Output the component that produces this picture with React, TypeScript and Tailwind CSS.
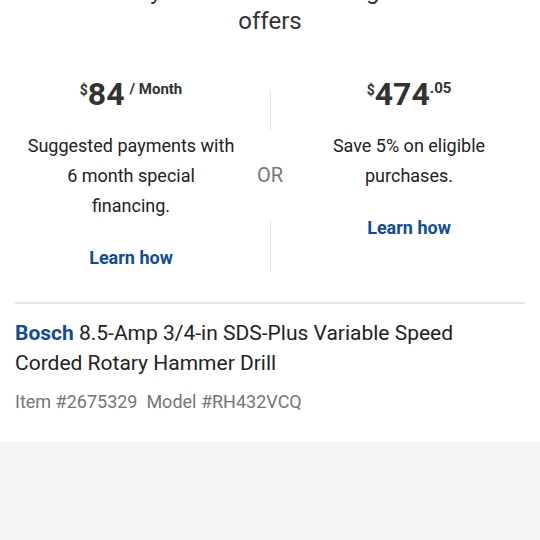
export default function App() {
  return (
    <div className="flex h-[540px] w-[540px] flex-col overflow-hidden bg-[#f5f5f5] font-['Roboto',sans-serif] text-[#333]">
      <section className="bg-white pb-[27px]">
        <div className="-mt-[24px] px-[15px] text-center text-[24px] leading-[30px] text-[#333]">
          <p>With MyLowe's Credit Card get these</p>
          <p>offers</p>
        </div>

        <div className="mt-[42px] grid grid-cols-[232px_1fr_232px] px-[15px]">
          <div className="flex flex-col items-center text-center">
            <div className="flex items-start font-bold text-[#333]">
              <span className="mt-[5px] text-[14px] leading-none">$</span>
              <span className="text-[32px] leading-[32px]">84</span>
              <span className="mt-[4px] ml-[5px] text-[15px] leading-none">/ Month</span>
            </div>
            <p className="mt-[21px] text-[18px] leading-[30px] text-[#222]">
              Suggested payments with
              <br />6 month special
              <br />financing.
            </p>
            <a className="mt-[22px] text-[18px] font-bold leading-[30px] text-[#0f4c9e]">Learn how</a>
          </div>

          <div className="flex flex-col items-center pt-[13px]">
            <div className="h-[39px] w-px bg-[#e3e3e3]" />
            <span className="mt-[33px] text-[20px] leading-[24px] text-[#777]">OR</span>
            <div className="mt-[33px] h-[52px] w-px bg-[#e3e3e3]" />
          </div>

          <div className="flex flex-col items-center text-center">
            <div className="flex items-start font-bold text-[#333]">
              <span className="mt-[5px] text-[14px] leading-none">$</span>
              <span className="text-[32px] leading-[32px]">474</span>
              <span className="mt-[3px] text-[15px] leading-none">.05</span>
            </div>
            <p className="mt-[21px] text-[18px] leading-[30px] text-[#222]">
              Save 5% on eligible
              <br />purchases.
            </p>
            <a className="mt-[22px] text-[18px] font-bold leading-[30px] text-[#0f4c9e]">Learn how</a>
          </div>
        </div>

        <div className="mx-[15px] mt-[29px] border-t-2 border-[#e6e6e6]" />

        <div className="px-[15px] pt-[14px]">
          <h1 className="text-[21px] leading-[30px] text-[#222]">
            <span className="font-bold text-[#0f4c9e]">Bosch</span> 8.5-Amp 3/4-in SDS-Plus Variable Speed
            Corded Rotary Hammer Drill
          </h1>
          <p className="mt-[11px] text-[18px] leading-[26px] text-[#767676]">
            Item #2675329&nbsp;&nbsp;Model #RH432VCQ
          </p>
        </div>
      </section>
    </div>
  );
}
